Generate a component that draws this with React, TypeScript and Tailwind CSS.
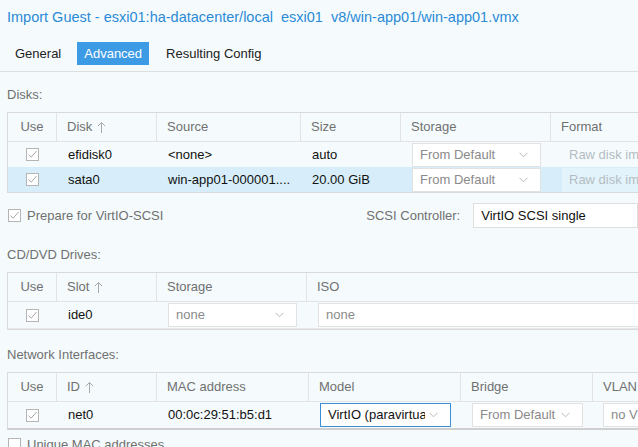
import React from "react";

const Check = ({ checked = true }: { checked?: boolean }) => (
  <svg width="13" height="13" viewBox="0 0 13 13" className="shrink-0">
    <rect x="0.5" y="0.5" width="12" height="12" fill="#fff" stroke="#b5b5b5" />
    {checked && <path d="M2.5 6.5 L5.2 9.2 L10.5 3" fill="none" stroke="#a8a8a8" strokeWidth="1" />}
  </svg>
);

const Chevron = () => (
  <svg width="9" height="6" viewBox="0 0 9 6" className="shrink-0">
    <path d="M0.5 0.8 L4.5 4.8 L8.5 0.8" fill="none" stroke="#b8b8b8" strokeWidth="1" />
  </svg>
);

const Arrow = () => (
  <svg width="9" height="13" viewBox="0 0 9 13" className="ml-[5px]">
    <path d="M4.5 1.5 V12 M0.8 5.2 L4.5 1.5 L8.2 5.2" fill="none" stroke="#aaa" strokeWidth="1" />
  </svg>
);

function Combo({
  text,
  w,
  muted = true,
  focus = false,
  chevron = true,
}: {
  text: string;
  w: string;
  muted?: boolean;
  focus?: boolean;
  chevron?: boolean;
}) {
  return (
    <div
      className={`${w} h-[24px] flex items-center pl-[7px] pr-[12px] overflow-hidden whitespace-nowrap border ${
        focus ? "border-[#3a8fd8] bg-white" : "border-[#e2e2e2] bg-white"
      }`}
    >
      <span className={`flex-1 overflow-hidden mr-[4px] ${muted ? "text-[#8a8a8a]" : "text-[#111]"}`}>{text}</span>
      {chevron && <Chevron />}
    </div>
  );
}

function Head({ cols }: { cols: { w: string; label: string; arrow?: boolean; center?: boolean }[] }) {
  return (
    <div className="flex h-[29px] border-b border-[#e3e3e3] text-[#707070]">
      {cols.map((c, i) => (
        <div
          key={i}
          className={`${c.w} shrink-0 flex items-center whitespace-nowrap ${c.center ? "justify-center" : "pl-[10px]"} ${
            i < cols.length - 1 ? "border-r border-[#e3e3e3]" : ""
          }`}
        >
          {c.label}
          {c.arrow && <Arrow />}
        </div>
      ))}
    </div>
  );
}

function Label({ children, pt }: { children: React.ReactNode; pt: string }) {
  return <div className={`flex items-center text-[#707070] pl-[7px] ${pt}`}>{children}</div>;
}

export default function App() {
  return (
    <div
      className="w-[638px] h-[447px] overflow-hidden bg-[#f5fbfd] text-[13px] text-[#111]"
      style={{ fontFamily: '"Liberation Sans", Arial, sans-serif' }}
    >
      {/* title */}
      <div className="h-[36px] flex items-center pl-[7px] text-[14.5px] text-[#2b8ad6] whitespace-pre">
        Import Guest - esxi01:ha-datacenter/local  esxi01  v8/win-app01/win-app01.vmx
      </div>

      {/* tabs */}
      <div className="mt-[6px] h-[23px] flex items-center">
        <div className="ml-[15px] text-[#222]">General</div>
        <div className="ml-[16px] h-[23px] px-[7px] flex items-center bg-[#3d9be5] text-white">Advanced</div>
        <div className="ml-[17px] text-[#222]">Resulting Config</div>
      </div>
      <div className="mt-[6px] h-px bg-[#dcdfe1]" />

      {/* Disks */}
      <Label pt="h-[40px] pt-[5px]">Disks:</Label>
      <div className="ml-[7px] w-[700px] border border-[#dadada]">
        <Head
          cols={[
            { w: "w-[49px]", label: "Use", center: true },
            { w: "w-[100px]", label: "Disk", arrow: true },
            { w: "w-[144px]", label: "Source" },
            { w: "w-[100px]", label: "Size" },
            { w: "w-[150px]", label: "Storage" },
            { w: "flex-1", label: "Format" },
          ]}
        />
        {[
          { d: "efidisk0", s: "<none>", z: "auto", sel: false },
          { d: "sata0", s: "win-app01-000001....", z: "20.00 GiB", sel: true },
        ].map((r) => (
          <div key={r.d} className={`flex h-[25px] items-center ${r.sel ? "bg-[#d7eefa]" : ""}`}>
            <div className="w-[49px] flex justify-center">
              <Check />
            </div>
            <div className="w-[100px] pl-[11px]">{r.d}</div>
            <div className="w-[144px] pl-[11px] whitespace-nowrap">{r.s}</div>
            <div className="w-[100px] pl-[11px]">{r.z}</div>
            <div className="w-[150px] pl-[11px]">
              <Combo text="From Default" w="w-[129px]" />
            </div>
            <div className="flex-1 pl-[11px]">
              <div
                className={`h-[24px] flex items-center pl-[7px] whitespace-nowrap text-[#b3bcc2] ${
                  r.sel ? "bg-[#e3f3fb]" : ""
                }`}
              >
                Raw disk image (raw)
              </div>
            </div>
          </div>
        ))}
      </div>

      {/* prepare row */}
      <div className="mt-[10px] h-[25px] flex items-center">
        <div className="pl-[8px] flex items-center gap-[6px] text-[#707070]">
          <Check />
          Prepare for VirtIO-SCSI
        </div>
        <div className="ml-[203px] text-[#707070]">SCSI Controller:</div>
        <div className="ml-[13px] flex-1 h-[25px] flex items-center pl-[7px] bg-white border border-[#dedede] text-[#111]">
          VirtIO SCSI single
        </div>
      </div>

      {/* CD/DVD */}
      <Label pt="h-[44px] pt-[10px]">CD/DVD Drives:</Label>
      <div className="ml-[7px] w-[700px] border border-[#dadada]">
        <Head
          cols={[
            { w: "w-[49px]", label: "Use", center: true },
            { w: "w-[100px]", label: "Slot", arrow: true },
            { w: "w-[150px]", label: "Storage" },
            { w: "flex-1", label: "ISO" },
          ]}
        />
        <div className="flex h-[27px] items-center border-b border-[#e6e6e6]">
          <div className="w-[49px] flex justify-center">
            <Check />
          </div>
          <div className="w-[100px] pl-[11px]">ide0</div>
          <div className="w-[150px] pl-[11px]">
            <Combo text="none" w="w-[129px]" />
          </div>
          <div className="flex-1 pl-[11px]">
            <Combo text="none" w="w-[330px]" chevron={false} />
          </div>
        </div>
      </div>

      {/* Network */}
      <Label pt="h-[42px] pt-[8px]">Network Interfaces:</Label>
      <div className="ml-[7px] w-[700px] border border-[#dadada] border-b-2 border-b-[#cfcfcf]">
        <Head
          cols={[
            { w: "w-[49px]", label: "Use", center: true },
            { w: "w-[100px]", label: "ID", arrow: true },
            { w: "w-[152px]", label: "MAC address" },
            { w: "w-[152px]", label: "Model" },
            { w: "w-[132px]", label: "Bridge" },
            { w: "flex-1", label: "VLAN Tag" },
          ]}
        />
        <div className="flex h-[26px] items-center">
          <div className="w-[49px] flex justify-center">
            <Check />
          </div>
          <div className="w-[100px] pl-[11px]">net0</div>
          <div className="w-[152px] pl-[11px]">00:0c:29:51:b5:d1</div>
          <div className="w-[152px] pl-[11px]">
            <Combo text="VirtIO (paravirtualized)" w="w-[131px]" muted={false} focus />
          </div>
          <div className="w-[132px] pl-[11px]">
            <Combo text="From Default" w="w-[111px]" />
          </div>
          <div className="flex-1 pl-[10px]">
            <Combo text="no VLAN" w="w-[100px]" chevron={false} />
          </div>
        </div>
      </div>

      <div className="mt-[5px] pl-[8px] flex items-center gap-[6px] text-[#707070]">
        <Check checked={false} />
        Unique MAC addresses
      </div>
    </div>
  );
}
